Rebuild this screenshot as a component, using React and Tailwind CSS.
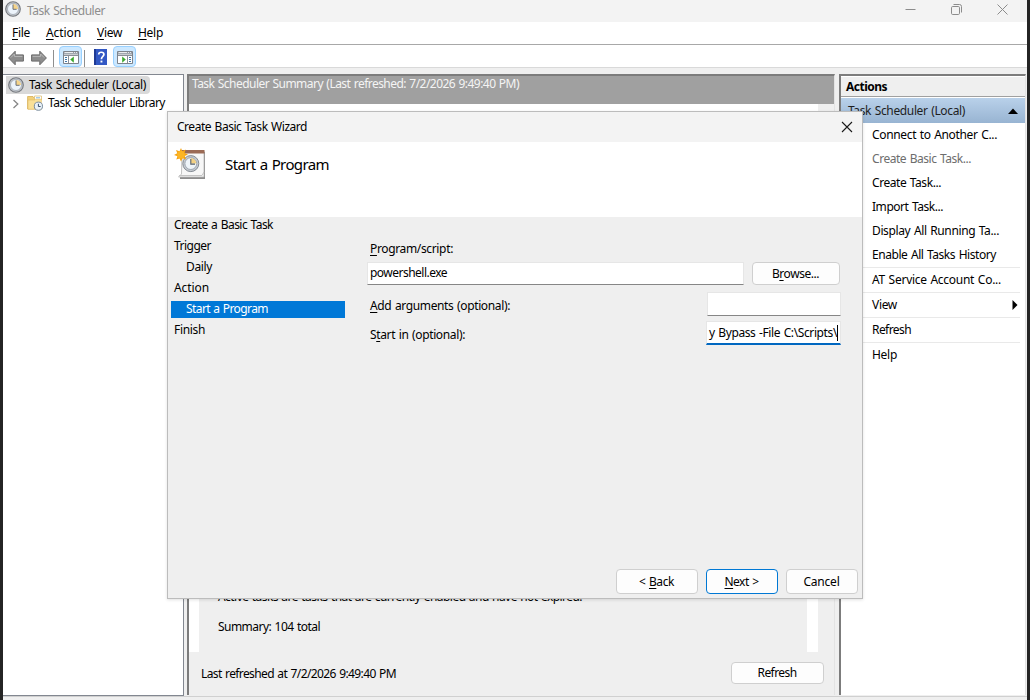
import React, { useLayoutEffect, useRef, useState } from 'react'

// Text run set to a given width, '&' marks the access key
const Label = ({ w, children, className = '' }) => {
  const ref = useRef(null)
  const [spacing, setSpacing] = useState(0)

  useLayoutEffect(() => {
    const natural = ref.current.getBoundingClientRect().width
    const count = ref.current.textContent.length
    setSpacing((w - natural) / count)
  }, [w])

  const at = children.indexOf('&')
  return (
    <span ref={ref} className={`inline-block shrink-0 whitespace-pre [word-spacing:0.8px] ${className}`} style={{ letterSpacing: `${spacing}px` }}>
      {at < 0 ? children : (
        <>
          {children.slice(0, at)}
          <span className="underline underline-offset-2">{children[at + 1]}</span>
          {children.slice(at + 2)}
        </>
      )}
    </span>
  )
}

const ClockIcon = ({ className = 'size-4' }) => (
  <svg viewBox="0 0 16 16" className={`shrink-0 ${className}`}>
    <circle cx="8" cy="8" r="7.3" fill="#c4c7cb" stroke="#74787e" strokeWidth="1.1" />
    <circle cx="8" cy="8" r="5.5" fill="#edf4fb" stroke="#98a1ab" strokeWidth="0.7" />
    <path d="M8 8V2.9A5.1 5.1 0 0 1 13.1 8Z" fill="#f5d48a" />
    <path d="M8 3.5V8.3H11.6" fill="none" stroke="#6b7078" strokeWidth="1" />
  </svg>
)

const FolderClockIcon = () => (
  <svg viewBox="0 0 16 16" className="size-4 shrink-0">
    <path d="M0.6 1.5H6L7 3H13.5V14H0.6Z" fill="#f2d078" stroke="#d2a748" strokeWidth="0.7" />
    <path d="M7.5 1H14.5V5H7.5Z" fill="#fff" stroke="#d9b765" strokeWidth="0.7" />
    <path d="M9 2.8H13" stroke="#7fb4dd" strokeWidth="1" />
    <path d="M1 5H7.5L8.5 4.2H14.4V14.2H1Z" fill="#f9e097" stroke="#dcb65c" strokeWidth="0.5" />
    <circle cx="11.4" cy="11.2" r="4.1" fill="#e9f1f8" stroke="#7b8c9c" strokeWidth="1" />
    <path d="M11.4 8.8V11.5H13.6" fill="none" stroke="#38506a" strokeWidth="1" />
  </svg>
)

const ArrowIcon = ({ flip, className = '' }) => (
  <svg viewBox="0 0 16 16" className={`h-4 w-4 ${className}`}>
    <g transform={flip ? 'matrix(-1 0 0 1 16 0)' : undefined}>
      <path d="M0.6 8 7.2 1.2V4.9H15.4V11.1H7.2V14.8Z" fill="#8d8d8d" stroke="#6a6a6a" strokeWidth="1" />
      <path d="M2.8 7.6 6.4 4V6.4H14.4" fill="none" stroke="#b8b8b8" strokeWidth="1" />
    </g>
  </svg>
)

const PaneIcon = ({ flip }) => (
  <svg viewBox="0 0 16 13" className="h-[13px] w-4">
    <path d="M0.5 0.5H15.5V12.5H0.5Z" fill="#fff" stroke="#7d838b" />
    <path d="M1 1H15V4H1Z" fill="#969da6" />
    <path d="M1.5 1.5H10M11 1.5H12M13 1.5H14" stroke="#fff" strokeWidth="0.8" />
    <path d="M1 3.3H15" stroke="#e4e7ea" strokeWidth="0.8" />
    <path d="M1 4.5H15" stroke="#8a9098" />
    <g transform={flip ? 'matrix(-1 0 0 1 16 0)' : undefined}>
      <path d="M5.5 5V12" stroke="#8a9098" />
      <path d="M2 6.5H4M2 8.5H4M2 10.5H4" stroke="#3f78a8" />
      <path d="M7.2 8.6 10.8 5.4V11.8Z" fill="#3aa82e" />
    </g>
  </svg>
)

const HelpIcon = () => (
  <svg viewBox="0 0 13 16" className="h-4 w-[13px]">
    <path d="M0 0H13V16H0Z" fill="#3258c4" />
    <path d="M0 0H2V16H0Z" fill="#1f3a94" />
    <path d="M4.7 5.4C4.7 2.5 9.9 2.5 9.9 5.4C9.9 7.4 7.4 7.4 7.4 10.2" fill="none" stroke="#fff" strokeWidth="1.7" />
    <path d="M6.5 11.6H8.4V13.5H6.5Z" fill="#fff" />
  </svg>
)

const WizardIcon = () => (
  <svg viewBox="0 0 32 32" className="size-8">
    <path d="M8 4H31V31H6V27H8Z" fill="#8d8d8d" />
    <path d="M8 3H30V29H4.5L7.5 26Z" fill="#f7f7f7" stroke="#b5b5b5" strokeWidth="0.8" />
    <path d="M8 2H30.5V5.5H8Z" fill="#9b6a55" />
    <path d="M5 27.5H28L30 24" fill="none" stroke="#c4c4c4" />
    <circle cx="16.8" cy="15.6" r="8" fill="#c5cad0" stroke="#848b93" />
    <circle cx="16.8" cy="15.6" r="5.9" fill="#eef4f9" stroke="#929ba6" strokeWidth="0.8" />
    <path d="M16.8 15.6V10.1A5.5 5.5 0 0 1 22.3 15.6Z" fill="#f3d184" />
    <path d="M16.8 11V16.1H21" fill="none" stroke="#59616b" strokeWidth="1.1" />
    <path d="M7 0 8.3 3.2 11.6 1.6 10.6 5 14 6.5 10.7 8 12 11.4 8.5 10.3 7 13.5 5.6 10.4 2.3 11.6 3.5 8.2 0 7 3.3 5.3 2 2 5.5 3.3Z" fill="#f5a312" />
    <circle cx="7" cy="6.8" r="3.8" fill="#fcb524" />
  </svg>
)

const menus = [
  ['&File', 18],
  ['&Action', 35],
  ['&View', 25],
  ['&Help', 25],
]

const steps = [
  { text: 'Create a Basic Task', w: 99 },
  { text: 'Trigger', w: 37 },
  { text: 'Daily', w: 26, sub: true },
  { text: 'Action', w: 35 },
  { text: 'Start a Program', w: 82, sub: true, active: true },
  { text: 'Finish', w: 31 },
]

const actions = [
  { text: 'Connect to Another C...', w: 125 },
  { text: 'Create Basic Task...', w: 99, disabled: true },
  { text: 'Create Task...', w: 69 },
  { text: 'Import Task...', w: 71 },
  { text: 'Display All Running Ta...', w: 127 },
  { text: 'Enable All Tasks History', w: 124 },
  { text: 'AT Service Account Co...', w: 129, line: true },
  { text: 'View', w: 25, line: true, more: true },
  { text: 'Refresh', w: 39, line: true },
  { text: 'Help', w: 25, line: true },
]

const Button = ({ children, w, className = '' }) => (
  <button className={`flex shrink-0 items-center justify-center rounded border bg-[#fdfdfd] pr-px ${className}`}>
    <Label w={w}>{children}</Label>
  </button>
)

const TreePane = () => (
  <div className="h-[622px] w-[181px] shrink-0 border border-l-0 border-[#828790] bg-white">
    <div className="mt-px ml-[3px] flex h-[18px] w-[144px] items-center gap-[5px] rounded-r-sm bg-[#d9d9d9] pl-0.5">
      <ClockIcon />
      <Label w={117}>Task Scheduler (Local)</Label>
    </div>
    <div className="flex h-[18px] items-center pl-[9px]">
      <svg viewBox="0 0 8 10" className="mt-0.5 mr-[7px] h-2.5 w-2">
        <path d="M1.5 1 5.8 5 1.5 9" fill="none" stroke="#868686" strokeWidth="1.3" />
      </svg>
      <FolderClockIcon />
      <Label w={117} className="ml-[5px]">Task Scheduler Library</Label>
    </div>
  </div>
)

const SummaryPane = () => (
  <div className="ml-[3px] flex h-[621px] w-[648px] shrink-0 flex-col border-t-2 border-r border-l-2 border-t-[#7c7c7c] border-r-[#e3e3e3] border-l-[#7c7c7c]">
    <div className="h-7 bg-[#a0a0a0] pl-[3px] leading-4 text-[#f4f4f4]">
      <Label w={327}>Task Scheduler Summary (Last refreshed: 7/2/2026 9:49:40 PM)</Label>
    </div>
    <div className="flex h-[548px] w-[629px] flex-col bg-white">
      <div className="mt-4 ml-2.5 flex w-[608px] grow flex-col items-start justify-end bg-[#efefef] pb-[17px] pl-[19px]">
        <Label w={364} className="mb-3.5 leading-4">Active tasks are tasks that are currently enabled and have not expired.</Label>
        <Label w={102} className="leading-4">Summary: 104 total</Label>
      </div>
    </div>
    <div className="flex h-[42px] items-center justify-between pr-2.5 pl-3">
      <Label w={195} className="mt-0.5">Last refreshed at 7/2/2026 9:49:40 PM</Label>
      <Button w={39} className="h-[22px] w-[93px] border-[#cfcfcf]">Refresh</Button>
    </div>
  </div>
)

const ActionsPane = () => (
  <div className="ml-1 flex h-[621px] w-[187px] shrink-0 flex-col border-t-2 border-r border-l-2 border-t-[#7c7c7c] border-r-[#e3e3e3] border-l-[#7c7c7c] bg-white">
    <div className="flex h-[21px] items-center border-t border-b border-t-white border-b-[#a0a0a0] bg-[#efefef] pl-[5px] font-bold">
      <Label w={41}>Actions</Label>
    </div>
    <div className="mt-px flex h-[25px] items-center justify-between bg-linear-to-b from-[#b9d1ea] to-[#98b4d2] pr-[7px] pl-[7px] text-[#1e1e1e]">
      <Label w={117}>Task Scheduler (Local)</Label>
      <svg viewBox="0 0 10 6" className="h-1.5 w-2.5"><path d="M0 6 5 0.5 10 6Z" /></svg>
    </div>
    {actions.map((item) => (
      <div
        key={item.text}
        className={`mr-[5px] flex items-center justify-between pl-[31px] ${item.line ? 'h-[25px] border-t border-[#e9e9e9]' : 'h-6'} ${item.disabled ? 'text-[#6d6d6d]' : ''}`}
      >
        <Label w={item.w}>{item.text}</Label>
        {item.more && <svg viewBox="0 0 6 10" className="mr-0.5 h-2.5 w-1.5"><path d="M0.5 0 5.5 5 0.5 10Z" /></svg>}
      </div>
    ))}
  </div>
)

const Wizard = () => (
  <div className="absolute top-[111px] left-[167px] flex h-[488px] w-[696px] flex-col border border-[#bcbcbc] bg-[#efefef] shadow-[0_1px_3px_rgba(0,0,0,0.12)]">
    <div className="flex h-[30px] shrink-0 items-center justify-between bg-[#f3f3f3] pr-[9px] pl-[9px]">
      <Label w={130}>Create Basic Task Wizard</Label>
      <svg viewBox="0 0 12 12" className="mb-px size-3"><path d="M1 1 11 11M11 1 1 11" stroke="#1a1a1a" strokeWidth="1.1" /></svg>
    </div>
    <div className="flex h-[75px] shrink-0 items-start bg-white pt-1.5 pl-1.5">
      <WizardIcon />
      <Label w={104} className="mt-1.5 ml-[19px] text-[15px] leading-5">Start a Program</Label>
    </div>
    <div className="flex grow">
      <div className="w-[177px] pl-[3px]">
        {steps.map((s) => (
          <div key={s.text} className="flex h-[21px] items-start">
            <div className={`flex h-[17px] w-full items-start ${s.sub ? 'pl-[15px]' : 'pl-[3px]'} ${s.active ? 'bg-[#0078d7] text-white' : ''}`}>
              <Label w={s.w}>{s.text}</Label>
            </div>
          </div>
        ))}
      </div>
      <div className="ml-[22px] w-[474px] pt-[23px]">
        <Label w={83} className="ml-[3px] leading-[18px]">&Program/script:</Label>
        <div className="mt-1 flex items-start">
          <div className="flex h-[23px] w-[377px] items-center border border-[#e6e6e6] border-b-[#868686] bg-white pl-0.5">
            <Label w={77} className="pb-px">powershell.exe</Label>
          </div>
          <Button w={47} className="ml-2 h-[23px] w-[88px] border-[#cfcfcf]">B&rowse...</Button>
        </div>
        <div className="mt-[7px] flex h-[24px] w-[474px] items-center justify-between pl-[3px]">
          <Label w={140} className="mt-1">&Add arguments (optional):</Label>
          <div className="h-[24px] w-[134px] border border-[#e6e6e6] border-b-[#868686] bg-white" />
        </div>
        <div className="mt-[5px] flex h-[24px] w-[474px] items-center justify-between pl-[3px]">
          <Label w={95} className="mt-1">S&tart in (optional):</Label>
          <div className="flex h-[24px] w-[135px] items-center border border-b-2 border-[#e6e6e6] border-b-[#0067c0] bg-white pl-0.5">
            <Label w={128}>y Bypass -File C:\Scripts\</Label>
            <span className="h-4 w-px shrink-0 bg-black" />
          </div>
        </div>
      </div>
    </div>
    <div className="flex justify-end gap-2 pr-1 pb-1">
      <Button w={35} className="h-[25px] w-[82px] border-[#cfcfcf]">{'< &Back'}</Button>
      <Button w={34} className="h-[25px] w-[72px] border-[#0078d4]">{'&Next >'}</Button>
      <Button w={36} className="h-[25px] w-[72px] border-[#cfcfcf]">Cancel</Button>
    </div>
  </div>
)

const App = () => {
  return (
    <div className="relative h-[700px] w-[1030px] overflow-hidden bg-[#242424] px-[3px] font-['Noto_Sans',sans-serif] text-[12px] leading-4 text-black">
      <div className="flex h-full flex-col bg-[#efefef]">
        <div className="flex h-[22px] items-center justify-between bg-[#f3f3f3] pr-[19px] pl-0.5 text-[#8e8e8e]">
          <div className="flex items-center gap-[6px]">
            <ClockIcon className="-mt-1 size-4" />
            <Label w={78}>Task Scheduler</Label>
          </div>
          <div className="-mt-1 flex items-center gap-[35px]">
            <svg viewBox="0 0 11 11" className="size-[11px]"><path d="M0.5 5.5H10.5" stroke="#8c8c8c" /></svg>
            <svg viewBox="0 0 11 11" className="size-[11px]" fill="none" stroke="#8c8c8c">
              <rect x="0.5" y="2.5" width="8" height="8" rx="1.2" />
              <path d="M2.5 0.5H8.5Q10.5 0.5 10.5 2.5V8.5" />
            </svg>
            <svg viewBox="0 0 11 11" className="size-[11px]"><path d="M0.5 0.5 10.5 10.5M10.5 0.5 0.5 10.5" stroke="#8c8c8c" /></svg>
          </div>
        </div>
        <div className="flex h-[23px] items-center gap-4 border-b border-[#a8a8a8] bg-white pl-[9px]">
          {menus.map(([text, w]) => <Label key={text} w={w}>{text}</Label>)}
        </div>
        <div className="flex h-[23px] items-center border-b border-[#d9d9d9] bg-white pl-[5px]">
          <ArrowIcon className="mt-1" />
          <ArrowIcon flip className="mt-1 ml-[7px]" />
          <span className="mt-1 ml-1.5 h-[17px] w-px bg-[#8f8f8f]" />
          <div className="ml-[5px] flex h-[21px] w-[23px] items-center justify-center rounded-sm border border-[#99d1ff] bg-[#cce8ff] pt-[3px]"><PaneIcon /></div>
          <span className="mt-1 ml-0.5 h-[17px] w-px bg-[#8f8f8f]" />
          <div className="mt-0.5 mr-1.5 ml-[9px]"><HelpIcon /></div>
          <div className="flex h-[21px] w-[23px] items-center justify-center rounded-sm border border-[#99d1ff] bg-[#cce8ff] pt-[3px]"><PaneIcon flip /></div>
        </div>
        <div className="flex h-[628px] items-start pt-1.5">
          <TreePane />
          <SummaryPane />
          <ActionsPane />
        </div>
        <div className="h-1 border-t border-[#d0d0d0]" />
      </div>
      <Wizard />
    </div>
  )
}

export default App
